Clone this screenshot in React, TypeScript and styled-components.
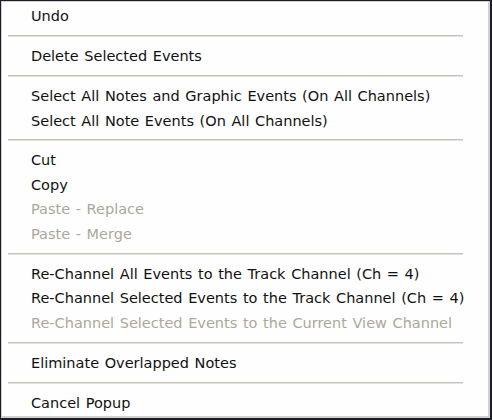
import styled, { createGlobalStyle } from "styled-components";

const GlobalStyle = createGlobalStyle`
  html, body {
    margin: 0;
    padding: 0;
    background: #ffffff;
  }
`;

type Entry = { label?: string; disabled?: boolean; separator?: boolean };

const entries: Entry[] = [
  { label: "Undo" },
  { separator: true },
  { label: "Delete Selected Events" },
  { separator: true },
  { label: "Select All Notes and Graphic Events (On All Channels)" },
  { label: "Select All Note Events (On All Channels)" },
  { separator: true },
  { label: "Cut" },
  { label: "Copy" },
  { label: "Paste - Replace", disabled: true },
  { label: "Paste - Merge", disabled: true },
  { separator: true },
  { label: "Re-Channel All Events to the Track Channel (Ch = 4)" },
  { label: "Re-Channel Selected Events to the Track Channel (Ch = 4)" },
  { label: "Re-Channel Selected Events to the Current View Channel", disabled: true },
  { separator: true },
  { label: "Eliminate Overlapped Notes" },
  { separator: true },
  { label: "Cancel Popup" },
];

export default function App() {
  return (
    <>
      <GlobalStyle />
      <Menu>
        {entries.map((e, i) =>
          e.separator ? (
            <Separator key={i} />
          ) : (
            <Item key={i} $disabled={e.disabled}>
              {e.label}
            </Item>
          )
        )}
      </Menu>
    </>
  );
}

const Menu = styled.div`
  box-sizing: border-box;
  width: 492px;
  height: 420px;
  background: #fefefe;
  border: 1px solid #1a1a30;
  border-right-width: 2px;
  border-bottom-width: 2px;
  box-shadow: inset 1px 1px 0 #d4d0c8, inset -2px -2px 0 #d4d0c8;
  padding: 3px 0 3px 0;
  display: flex;
  flex-direction: column;
  font-family: Tahoma, "DejaVu Sans", "Liberation Sans", sans-serif;
`;

const Item = styled.div<{ $disabled?: boolean }>`
  height: 24.5px;
  display: flex;
  align-items: center;
  padding-left: 30px;
  font-size: 14.5px;
  word-spacing: 1px;
  color: ${(p) => (p.$disabled ? "#aca899" : "#111111")};
  white-space: nowrap;
`;

const Separator = styled.div`
  height: 15.4px;
  display: flex;
  align-items: center;
  padding: 0 27px 0 7px;

  &::before {
    content: "";
    flex: 1;
    height: 1px;
    background: #c5c2b8;
    border-bottom: 1px solid #e4e2dc;
  }
`;
